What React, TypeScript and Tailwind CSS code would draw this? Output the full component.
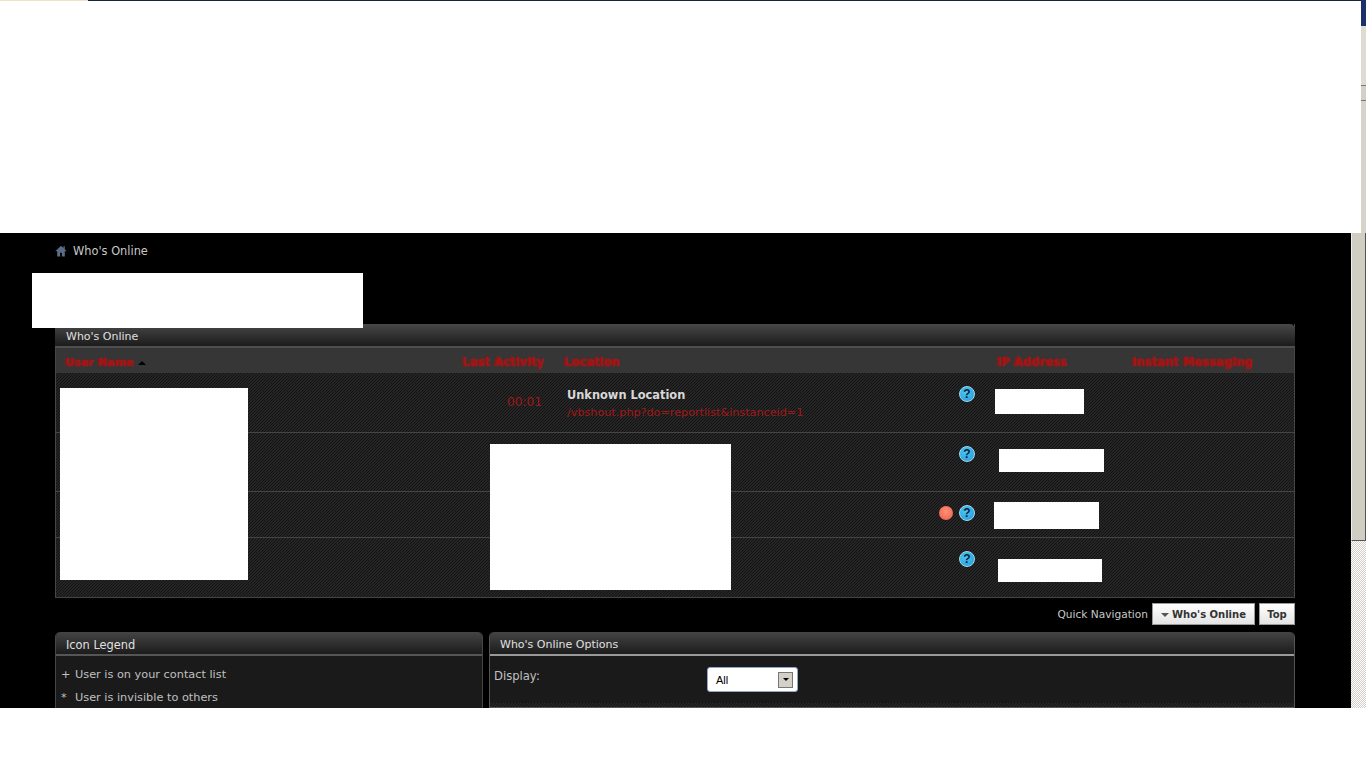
const rowCols = "grid grid-cols-[394px_102px_378px_55px_140px_1fr]";
const stripes = "bg-[repeating-linear-gradient(135deg,#131313_0px,#131313_0.7071px,#252525_0.7071px,#252525_2.1213px)]";
const font = "font-['DejaVu_Sans',sans-serif]";
const redGlow = "text-[#a51212] font-bold [text-shadow:0_0_2px_#b81616]";

function Help() {
  return (
    <span className="flex h-4 w-4 items-center justify-center rounded-full border border-[#9fdcf5] bg-[radial-gradient(circle_at_40%_35%,#4cc6f5,#2398d8)] text-[12px] leading-none font-bold text-[#071f3a] font-['Liberation_Sans',sans-serif]">
      ?
    </span>
  );
}

function Red() {
  return <span className="mt-px h-[14px] w-[14px] rounded-full bg-[radial-gradient(circle_at_50%_40%,#ff9078,#ee5a48)]" />;
}

function Row({ h, red, children }: { h: string; red?: boolean; children?: React.ReactNode }) {
  return (
    <div className={`${rowCols} ${h} border-b border-[#454545]`}>
      <div />
      {children ?? (
        <>
          <div />
          <div />
        </>
      )}
      <div className="flex items-start justify-end gap-[6px] pr-[10px] pt-[13px]">
        {red && <Red />}
        <Help />
      </div>
      <div />
      <div />
    </div>
  );
}

function Cover({ className }: { className: string }) {
  return <div className={`absolute bg-white ${className}`} />;
}

function PanelHead({ title, line, size }: { title: string; line: string; size: string }) {
  return (
    <div className={`h-6 rounded-t-[5px] border-b-2 ${line} bg-gradient-to-b from-[#454545] to-[#1c1c1c] pl-[10px] ${size} text-[#e0e0e0]`}>
      {title}
    </div>
  );
}

export default function App() {
  return (
    <div className={`relative h-[777px] w-[1366px] overflow-hidden bg-white ${font}`}>
      <div className="flex h-[233px]">
        <div className="flex-1">
          <div className="flex h-px">
            <div className="w-[88px] bg-[#efe3c0]" />
            <div className="flex-1 bg-[#14283c]" />
          </div>
        </div>
        <div className="flex w-[5px] flex-col">
          <div className="h-[26px] bg-[#1c2f6b]" />
          <div className="h-[59px] bg-[#dedbd2]" />
          <div className="h-[16px] border-y border-[#777] bg-[#d4d0c8]" />
          <div className="flex-1 bg-[#d6d3cb]" />
        </div>
      </div>

      <div className="flex h-[475px]">
        <main className="w-[1351px] overflow-hidden bg-black pl-[55px] pr-[56px]">
          <div className="flex h-[34px] items-center gap-[6px] pt-[3px] text-[11.4px] text-[#c8c8c8]">
            <svg width="12" height="12" viewBox="0 0 12 12" className="mb-[1px]">
              <path d="M6 .8 .3 6.2h1.9V11.5h2.9V7.8h1.8v3.7h2.9V6.2h1.9L9.8 4.2V1.3H8.4v1.6z" fill="#5a6c85" />
            </svg>
            <span>Who's Online</span>
          </div>

          <section className="mt-[57px] border-x border-[#454545]">
            <div className="-mx-px h-6 rounded-t-[5px] border-b-2 border-[#4e4e4e] bg-gradient-to-b from-[#484848] to-[#1c1c1c] pl-[11px] text-[11px] leading-[25px] text-[#e0e0e0]">
              Who's Online
            </div>
            <div className={`${rowCols} h-[25px] bg-[#363636] text-[11.6px] leading-[29px] ${redGlow}`}>
              <div className="flex h-[29px] items-center gap-[4px] pl-[9px]">
                <span className="text-[11.2px]">User Name</span>
                <span className="h-0 w-0 border-x-[4px] border-b-[4px] border-x-transparent border-b-black" />
              </div>
              <div className="whitespace-nowrap text-right pr-[8px]">Last Activity</div>
              <div className="pl-[12px]">Location</div>
              <div />
              <div className="pl-[12px]">IP Address</div>
              <div className="whitespace-nowrap pl-[7px]">Instant Messaging</div>
            </div>
            <div className={stripes}>
              <Row h="h-[60px]">
                <div className="pr-[10px] pt-[20px] text-right text-[12.2px] text-[#a01818]">00:01</div>
                <div className="pl-[15px] pt-[13px] text-[11.4px] leading-[17px]">
                  <div className="pt-px font-bold text-[#d8d8d8]">Unknown Location</div>
                  <div className="whitespace-nowrap text-[11.2px] text-[#a01818]">/vbshout.php?do=reportlist&amp;instanceid=1</div>
                </div>
              </Row>
              <Row h="h-[59px]" />
              <Row h="h-[46px]" red />
              <Row h="h-[60px]" />
            </div>
          </section>

          <div className="mt-[5px] flex h-[22px] items-center justify-end text-[10.6px] text-[#c8c8c8]">
            <span className="mr-[4px] pt-px">Quick Navigation</span>
            <span className="flex h-[22px] w-[103px] items-center justify-center gap-[3px] border border-[#999] bg-gradient-to-b from-white to-[#e4e4e4] pt-px text-[10px] font-bold text-[#333]">
              <span className="h-0 w-0 border-x-[4px] border-t-[4px] border-x-transparent border-t-[#555]" />
              Who's Online
            </span>
            <span className="ml-[4px] flex h-[22px] w-[36px] items-center justify-center border border-[#999] bg-gradient-to-b from-white to-[#e4e4e4] pt-px text-[10px] font-bold text-[#333]">
              Top
            </span>
          </div>

          <div className="mt-[7px] flex gap-[6px]">
            <section className="h-[90px] w-[428px] rounded-t-[5px] border-x border-[#454545] bg-[#1a1a1a]">
              <PanelHead title="Icon Legend" line="border-[#555] leading-[27px]" size="text-[11.4px]" />
              <div className="pl-[5px] pt-[7px] text-[11.3px] leading-[23px] text-[#c0c0c0]">
                <div className="flex"><span className="w-[14px]">+</span>User is on your contact list</div>
                <div className="flex"><span className="w-[14px]">*</span>User is invisible to others</div>
              </div>
            </section>
            <section className="flex h-[76px] flex-1 flex-col rounded-t-[5px] border-x border-b border-[#555] bg-[#1a1a1a]">
              <PanelHead title="Who's Online Options" line="border-[#999] leading-[25px]" size="text-[11px]" />
              <div className="flex flex-1 pl-[4px] pt-[11px] text-[11.6px] text-[#c0c0c0]">
                <span className="w-[213px] leading-[18px]">Display:</span>
                <span className="flex h-[25px] w-[91px] items-center justify-between rounded-[3px] border border-[#8fa8c8] bg-white pl-[8px] pr-[4px] text-[11px] text-black font-['Liberation_Sans',sans-serif]">
                  <span className="pt-[2px]">All</span>
                  <span className="flex h-[16px] w-[15px] items-center justify-center border border-[#777] bg-[#d4d0c8]">
                    <span className="h-0 w-0 border-x-[3px] border-t-[3px] border-x-transparent border-t-black" />
                  </span>
                </span>
              </div>
              <div className={`h-[4px] ${stripes}`} />
            </section>
          </div>
        </main>

        <div className="flex w-[15px] flex-col">
          <div className="h-[308px] border-x border-b border-l-[#eeeeee] border-r-[#555] border-b-[#555] bg-[#d0cdc3]" />
          <div className="flex-1 bg-[repeating-conic-gradient(#d4d0c8_0%_25%,#ffffff_0%_50%)] bg-[length:2px_2px]" />
        </div>
      </div>

      <Cover className="left-[32px] top-[273px] h-[55px] w-[331px]" />
      <Cover className="left-[60px] top-[388px] h-[192px] w-[188px]" />
      <Cover className="left-[490px] top-[444px] h-[146px] w-[241px]" />
      <Cover className="left-[995px] top-[389px] h-[25px] w-[89px]" />
      <Cover className="left-[999px] top-[449px] h-[23px] w-[105px]" />
      <Cover className="left-[994px] top-[502px] h-[27px] w-[105px]" />
      <Cover className="left-[998px] top-[559px] h-[23px] w-[104px]" />
    </div>
  );
}
